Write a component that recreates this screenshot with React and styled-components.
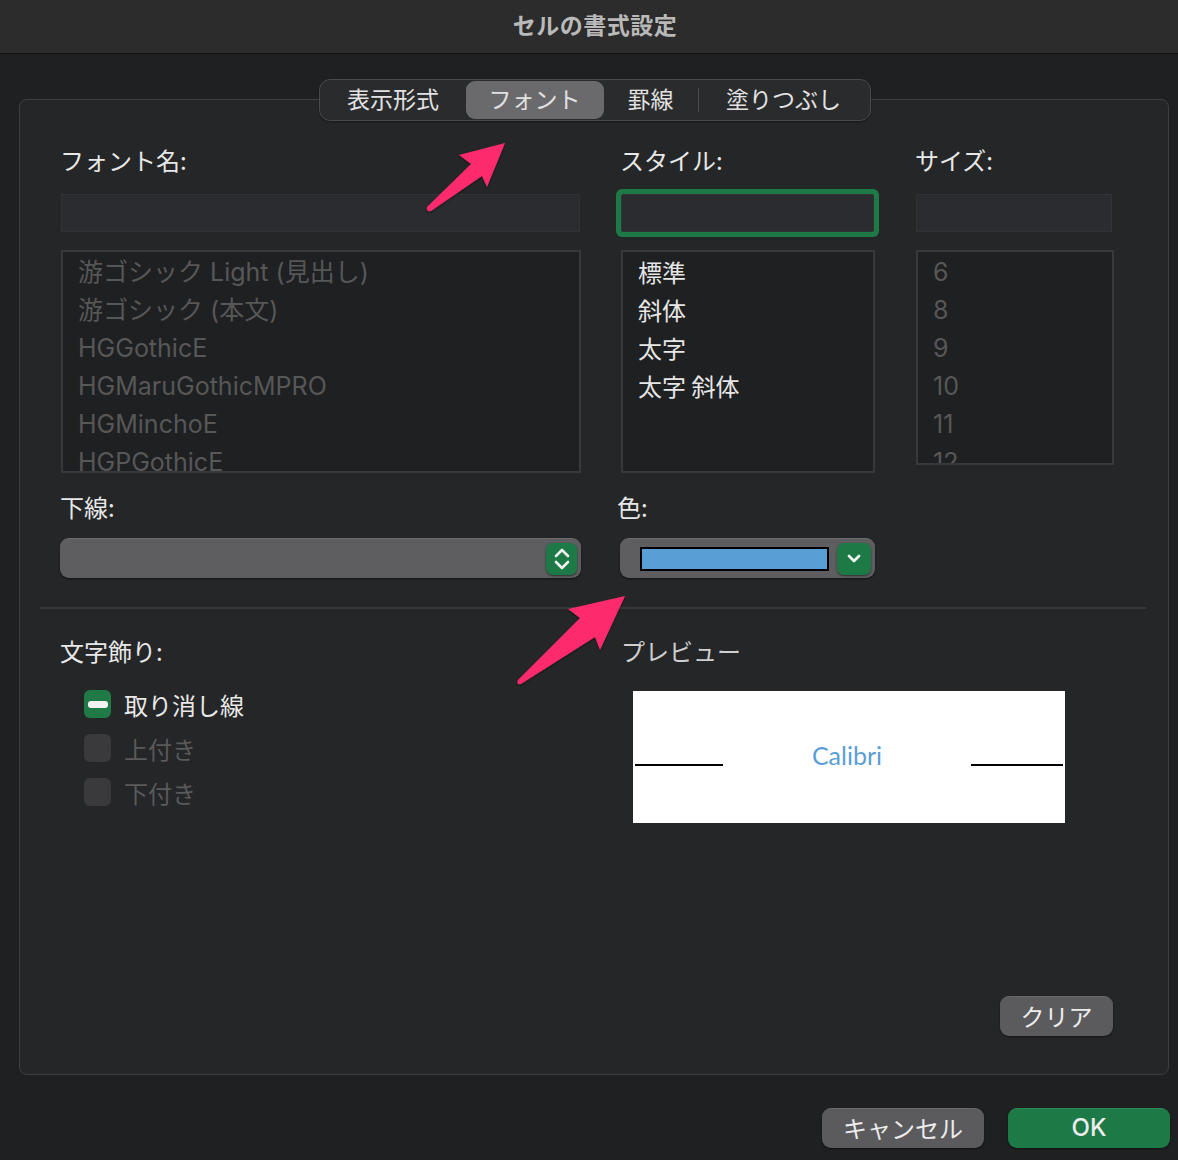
import React from 'react';
import styled, { createGlobalStyle } from 'styled-components';

const GlobalStyle = createGlobalStyle`
  html, body {
    margin: 0;
    padding: 0;
    background: #1f2022;
  }
  body {
    font-family: 'Inter', 'Noto Sans CJK JP', sans-serif;
    color: #e4e4e4;
  }
`;

const Window = styled.div`
  position: relative;
  width: 1178px;
  height: 1160px;
  background: #1f2022;
  overflow: hidden;
`;

const TitleBar = styled.div`
  height: 54px;
  box-sizing: border-box;
  background: #2c2c2c;
  border-bottom: 1px solid #0e0e0e;
  display: flex;
  align-items: center;
  justify-content: center;
  padding: 0 0 6px 12px;
  font-family: 'Noto Sans CJK JP', sans-serif;
  font-weight: 700;
  font-size: 23px;
  color: #b9b9b9;
  letter-spacing: 0.5px;
`;

const Body = styled.div`
  padding: 25px 8px 0 19px;
  display: flex;
  flex-direction: column;
`;

/* segmented control sits over the group box border */
const Tabs = styled.div`
  position: relative;
  z-index: 1;
  align-self: center;
  margin-bottom: -22px;
  display: flex;
  align-items: center;
  height: 40px;
  padding: 0 1px;
  border: 1px solid #4a4a4c;
  border-radius: 11px;
  background: #2a2b2d;
  box-shadow: 0 1px 2px rgba(0, 0, 0, 0.4);
`;

const Tab = styled.div`
  width: ${p => p.w}px;
  height: 38px;
  box-sizing: border-box;
  padding-bottom: 4px;
  display: flex;
  align-items: center;
  justify-content: center;
  font-family: 'Noto Sans CJK JP', sans-serif;
  font-size: 23px;
  color: #e2e2e2;
  border-radius: 9px;
  background: ${p => (p.active ? '#6a6a6c' : 'transparent')};
`;

const TabDivider = styled.div`
  width: 1px;
  height: 24px;
  background: #4c4c4e;
`;

const Group = styled.div`
  width: 1148px;
  height: 974px;
  box-sizing: content-box;
  border: 1px solid #3e3f41;
  border-radius: 8px;
  background: #252627;
  display: flex;
  flex-direction: column;
`;

const GroupInner = styled.div`
  flex: 1;
  display: flex;
  flex-direction: column;
  padding: 45px 55px 38px 40px;
`;

const TopGrid = styled.div`
  display: grid;
  grid-template-columns: 521px 256px 198px;
  column-gap: 39px;
  align-items: start;
`;

const Column = styled.div`
  display: flex;
  flex-direction: column;
`;

const Label = styled.div`
  height: 30px;
  line-height: 30px;
  font-family: 'Noto Sans CJK JP', sans-serif;
  font-size: 24px;
  white-space: nowrap;
  color: ${p => (p.dim ? '#cfcfcf' : '#e8e8e8')};
  margin-left: ${p => p.indent || 0}px;
`;

const TextField = styled.div`
  margin-top: 19px;
  margin-left: ${p => p.indent || 1}px;
  width: ${p => p.w}px;
  height: 38px;
  box-sizing: border-box;
  background: #2b2c2f;
  border: 1px solid #323336;
  border-radius: ${p => (p.focused ? '2px' : '0')};
  box-shadow: ${p => (p.focused ? '0 0 0 5px #1d7a46' : 'none')};
`;

const List = styled.div`
  margin-top: 18px;
  margin-left: ${p => p.indent || 1}px;
  width: ${p => p.w}px;
  height: ${p => p.h}px;
  box-sizing: border-box;
  border: 2px solid #38393b;
  background: #1f2022;
  padding: 1px 0 0 15px;
  overflow: hidden;
`;

const ListItem = styled.div`
  height: 38px;
  line-height: 38px;
  font-size: ${p => (p.cjk ? 24 : 25)}px;
  white-space: nowrap;
  color: ${p => (p.enabled ? '#e6e6e6' : '#575757')};
  font-family: ${p => (p.cjk ? "'Noto Sans CJK JP', sans-serif" : "'Inter', 'Noto Sans CJK JP', sans-serif")};
`;

const SecondGrid = styled.div`
  margin-top: 19px;
  display: grid;
  grid-template-columns: 521px 256px;
  column-gap: 39px;
`;

const PopUp = styled.div`
  margin-top: 16px;
  width: ${p => p.w}px;
  height: 40px;
  box-sizing: border-box;
  border-radius: 9px;
  background: #5e5e60;
  border-top: 1px solid #6c6c6e;
  box-shadow: 0 1px 2px rgba(0, 0, 0, 0.5);
  display: flex;
  align-items: center;
  justify-content: space-between;
  padding: 0 4px 0 20px;
`;

const GreenKnob = styled.div`
  width: ${p => p.w}px;
  height: 32px;
  border-radius: 7px;
  background: #1d7a46;
  box-shadow: 0 1px 2px rgba(0, 0, 0, 0.5);
  display: flex;
  align-items: center;
  justify-content: center;
`;

const Swatch = styled.div`
  width: 189px;
  height: 24px;
  box-sizing: border-box;
  border: 2px solid #000;
  background: #5a9ed6;
`;

const Separator = styled.div`
  margin: 29px 0 0 -20px;
  width: 1106px;
  height: 2px;
  background: #38393b;
`;

const BottomGrid = styled.div`
  margin-top: 27px;
  display: grid;
  grid-template-columns: 521px 460px;
  column-gap: 39px;
`;

const CheckList = styled.div`
  margin-top: 24px;
  display: flex;
  flex-direction: column;
  gap: 16px;
`;

const CheckRow = styled.div`
  display: flex;
  align-items: center;
  gap: 13px;
  padding-left: 24px;
  height: 28px;
  font-family: 'Noto Sans CJK JP', sans-serif;
  font-size: 24px;
  color: ${p => (p.disabled ? '#5a5a5a' : '#e8e8e8')};
`;

const Box = styled.div`
  width: 27px;
  height: 28px;
  flex-shrink: 0;
  border-radius: 6px;
  background: ${p => (p.checked ? '#1f7a46' : '#3a3a3c')};
  display: flex;
  align-items: center;
  justify-content: center;
`;

const Dash = styled.div`
  width: 20px;
  height: 7px;
  border-radius: 3px;
  background: #f2f2f2;
`;

const Preview = styled.div`
  margin: 25px 0 0 13px;
  width: 432px;
  height: 132px;
  background: #ffffff;
  display: flex;
  align-items: center;
  padding: 0 2px;
  box-sizing: border-box;
`;

const PreviewLine = styled.div`
  width: ${p => p.w}px;
  height: 2px;
  background: #000;
  margin-top: 16px;
`;

const PreviewText = styled.div`
  flex: 1;
  text-align: center;
  padding-bottom: 4px;
  font-family: 'Lato', 'Open Sans', sans-serif;
  font-size: 25px;
  color: #5a9ed6;
`;

const Button = styled.div`
  width: ${p => p.w}px;
  height: 40px;
  box-sizing: border-box;
  padding-bottom: 2px;
  border-radius: 9px;
  background: ${p => (p.primary ? '#1d7a46' : '#5b5b5d')};
  border-top: 1px solid ${p => (p.primary ? '#2a8a54' : '#6a6a6c')};
  box-shadow: 0 1px 2px rgba(0, 0, 0, 0.5);
  display: flex;
  align-items: center;
  justify-content: center;
  font-family: ${p => (p.primary ? "'Inter', sans-serif" : "'Noto Sans CJK JP', sans-serif")};
  font-weight: ${p => (p.primary ? 500 : 400)};
  font-size: 24px;
  color: #ececec;
`;

const ClearRow = styled.div`
  margin-top: auto;
  display: flex;
  justify-content: flex-end;
`;

const Footer = styled.div`
  margin-top: 33px;
  display: flex;
  justify-content: flex-end;
  gap: 24px;
`;

const Annotations = styled.svg`
  position: absolute;
  left: 0;
  top: 0;
  pointer-events: none;
`;

function Stepper() {
  return (
    <svg width="18" height="26" viewBox="0 0 18 26">
      <polyline points="3,10 9,4 15,10" fill="none" stroke="#f0f0f0" strokeWidth="2.6" strokeLinecap="round" strokeLinejoin="round" />
      <polyline points="3,16 9,22 15,16" fill="none" stroke="#f0f0f0" strokeWidth="2.6" strokeLinecap="round" strokeLinejoin="round" />
    </svg>
  );
}

function ChevronDown() {
  return (
    <svg width="16" height="12" viewBox="0 0 16 12">
      <polyline points="3,3 8,8 13,3" fill="none" stroke="#f0f0f0" strokeWidth="2.8" strokeLinecap="round" strokeLinejoin="round" />
    </svg>
  );
}

const fonts = [
  '游ゴシック Light (見出し)',
  '游ゴシック (本文)',
  'HGGothicE',
  'HGMaruGothicMPRO',
  'HGMinchoE',
  'HGPGothicE',
];

const styles = ['標準', '斜体', '太字', '太字 斜体'];
const sizes = ['6', '8', '9', '10', '11', '12'];

export default function App() {
  return (
    <>
      <GlobalStyle />
      <Window>
        <TitleBar>セルの書式設定</TitleBar>
        <Body>
          <Tabs>
            <Tab w={145}>表示形式</Tab>
            <Tab w={138} active>フォント</Tab>
            <Tab w={94}>罫線</Tab>
            <TabDivider />
            <Tab w={170}>塗りつぶし</Tab>
          </Tabs>
          <Group>
            <GroupInner>
              <TopGrid>
                <Column>
                  <Label>フォント名:</Label>
                  <TextField w={519} />
                  <List w={520} h={223}>
                    {fonts.map(f => (
                      <ListItem key={f}>{f}</ListItem>
                    ))}
                  </List>
                </Column>
                <Column>
                  <Label>スタイル:</Label>
                  <TextField w={253} focused />
                  <List w={254} h={223}>
                    {styles.map(s => (
                      <ListItem key={s} enabled cjk>{s}</ListItem>
                    ))}
                  </List>
                </Column>
                <Column>
                  <Label>サイズ:</Label>
                  <TextField w={196} />
                  <List w={198} h={215} indent={0}>
                    {sizes.map(s => (
                      <ListItem key={s}>{s}</ListItem>
                    ))}
                  </List>
                </Column>
              </TopGrid>

              <SecondGrid>
                <Column>
                  <Label>下線:</Label>
                  <PopUp w={521}>
                    <span />
                    <GreenKnob w={31}>
                      <Stepper />
                    </GreenKnob>
                  </PopUp>
                </Column>
                <Column>
                  <Label indent={-3}>色:</Label>
                  <PopUp w={255}>
                    <Swatch />
                    <GreenKnob w={34}>
                      <ChevronDown />
                    </GreenKnob>
                  </PopUp>
                </Column>
              </SecondGrid>

              <Separator />

              <BottomGrid>
                <Column>
                  <Label>文字飾り:</Label>
                  <CheckList>
                    <CheckRow>
                      <Box checked>
                        <Dash />
                      </Box>
                      取り消し線
                    </CheckRow>
                    <CheckRow disabled>
                      <Box />
                      上付き
                    </CheckRow>
                    <CheckRow disabled>
                      <Box />
                      下付き
                    </CheckRow>
                  </CheckList>
                </Column>
                <Column>
                  <Label dim indent={1}>プレビュー</Label>
                  <Preview>
                    <PreviewLine w={88} />
                    <PreviewText>Calibri</PreviewText>
                    <PreviewLine w={92} />
                  </Preview>
                </Column>
              </BottomGrid>

              <ClearRow>
                <Button w={113}>クリア</Button>
              </ClearRow>
            </GroupInner>
          </Group>
          <Footer>
            <Button w={162}>キャンセル</Button>
            <Button w={162} primary>OK</Button>
          </Footer>
        </Body>

        <Annotations width="1178" height="1160" viewBox="0 0 1178 1160">
          <defs>
            <filter id="sh" x="-20%" y="-20%" width="140%" height="140%">
              <feDropShadow dx="0" dy="1" stdDeviation="1.2" floodColor="#000" floodOpacity="0.5" />
            </filter>
          </defs>
          <path
            d="M505,143 L459,155 L471,164 L427,207 Q426,212 431,211 L482,176 L487,187 Z"
            fill="#fd2c6d"
            filter="url(#sh)"
          />
          <path
            d="M625,596 L568,609 L580,618 L518,680 Q516,685 521,684 L595,637 L600,650 Z"
            fill="#fd2c6d"
            filter="url(#sh)"
          />
        </Annotations>
      </Window>
    </>
  );
}
